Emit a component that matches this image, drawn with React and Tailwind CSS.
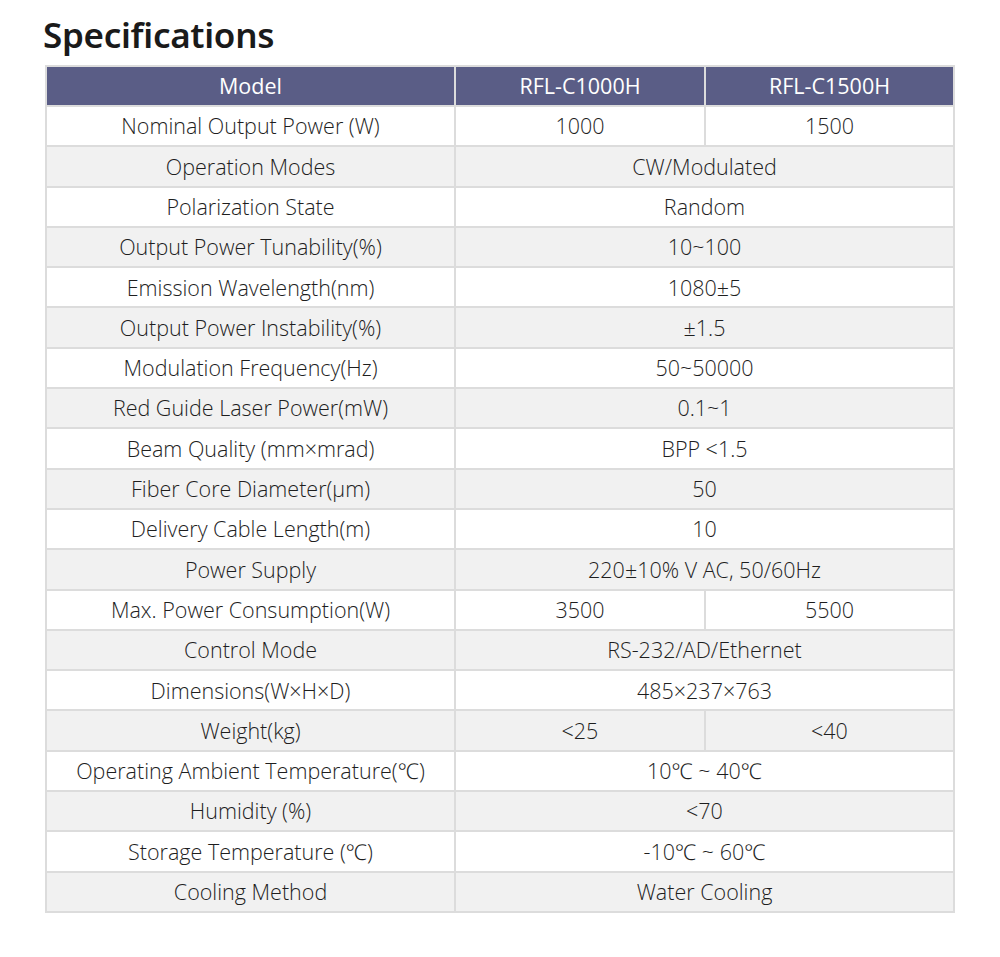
import React from 'react';

const rows = [
  ['Nominal Output Power (W)', '1000', '1500'],
  ['Operation Modes', 'CW/Modulated'],
  ['Polarization State', 'Random'],
  ['Output Power Tunability(%)', '10~100'],
  ['Emission Wavelength(nm)', '1080±5'],
  ['Output Power Instability(%)', '±1.5'],
  ['Modulation Frequency(Hz)', '50~50000'],
  ['Red Guide Laser Power(mW)', '0.1~1'],
  ['Beam Quality (mm×mrad)', 'BPP <1.5'],
  ['Fiber Core Diameter(μm)', '50'],
  ['Delivery Cable Length(m)', '10'],
  ['Power Supply', '220±10% V AC, 50/60Hz'],
  ['Max. Power Consumption(W)', '3500', '5500'],
  ['Control Mode', 'RS-232/AD/Ethernet'],
  ['Dimensions(W×H×D)', '485×237×763'],
  ['Weight(kg)', '<25', '<40'],
  ['Operating Ambient Temperature(℃)', '10℃ ~ 40℃'],
  ['Humidity (%)', '<70'],
  ['Storage Temperature (℃)', '-10℃ ~ 60℃'],
  ['Cooling Method', 'Water Cooling'],
];

const cell = 'border-2 border-[#dcdcdc] text-center leading-none';

export default function App() {
  return (
    <div className="bg-white min-h-[957px] w-[1000px] pt-[14px] font-['Noto_Sans',sans-serif]">
      <h1 className="ml-[43px] text-[35px] font-semibold leading-[42px] text-[#1a1a1a] tracking-[-0.3px]">
        Specifications
      </h1>
      <table className="ml-[45px] mt-[9px] w-[908px] border-collapse table-fixed text-[21.5px] font-light text-[#1e1e1e] font-['Open_Sans','Noto_Sans',sans-serif]">
        <colgroup>
          <col className="w-[409px]" />
          <col className="w-[250px]" />
          <col className="w-[249px]" />
        </colgroup>
        <thead>
          <tr className="h-[40px] bg-[#5a5d86] text-white">
            <th className={`${cell} font-normal`}>Model</th>
            <th className={`${cell} font-normal`}>RFL-C1000H</th>
            <th className={`${cell} font-normal`}>RFL-C1500H</th>
          </tr>
        </thead>
        <tbody>
          {rows.map((r, i) => (
            <tr key={i} className={`h-[40.3px] ${i % 2 === 1 ? 'bg-[#f1f1f1]' : 'bg-white'}`}>
              <td className={cell}>{r[0]}</td>
              {r.length === 3 ? (
                <>
                  <td className={cell}>{r[1]}</td>
                  <td className={cell}>{r[2]}</td>
                </>
              ) : (
                <td colSpan={2} className={cell}>
                  {r[1]}
                </td>
              )}
            </tr>
          ))}
        </tbody>
      </table>
    </div>
  );
}
